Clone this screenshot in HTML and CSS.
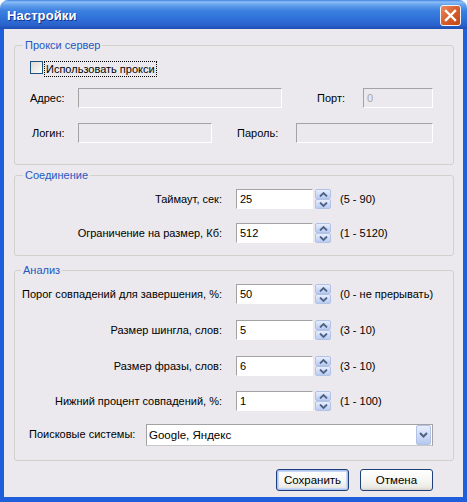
FILE: index.html
```html
<!DOCTYPE html>
<html lang="ru">
<head>
<meta charset="utf-8">
<title>Настройки</title>
<link rel="stylesheet" href="styles.css">
</head>
<body>
<div class="window">
  <div class="titlebar">
    <span class="title">Настройки</span>
    <span class="close">
      <svg width="13" height="13" viewBox="0 0 13 13"><path d="M2 2 L11 11 M11 2 L2 11" stroke="#fff" stroke-width="2.4" stroke-linecap="square"/></svg>
    </span>
  </div>
  <div class="client">
    <fieldset class="group g-proxy">
      <legend>Прокси сервер</legend>
      <div class="check-row">
        <span class="checkbox"></span>
        <span class="focus">Использовать прокси</span>
      </div>
      <div class="row r-addr">
        <span class="lbl l-addr">Адрес:</span>
        <span class="field disabled f-addr"></span>
        <span class="lbl l-port">Порт:</span>
        <span class="field disabled f-port"><span class="gray">0</span></span>
      </div>
      <div class="row r-login">
        <span class="lbl l-login">Логин:</span>
        <span class="field disabled f-login"></span>
        <span class="lbl l-pass">Пароль:</span>
        <span class="field disabled f-pass"></span>
      </div>
    </fieldset>

    <fieldset class="group g-conn">
      <legend>Соединение</legend>
      <div class="spin-row first">
        <span class="slbl">Таймаут, сек:</span>
        <span class="field num">25</span>
        <span class="spin">
          <span class="sbtn"><svg width="9" height="5" viewBox="0 0 9 5"><path d="M1 4.5 L4.5 1 L8 4.5" fill="none" stroke="#4d6185" stroke-width="1.8"/></svg></span>
          <span class="sbtn"><svg width="9" height="5" viewBox="0 0 9 5"><path d="M1 0.5 L4.5 4 L8 0.5" fill="none" stroke="#4d6185" stroke-width="1.8"/></svg></span>
        </span>
        <span class="range">(5 - 90)</span>
      </div>
      <div class="spin-row r2">
        <span class="slbl">Ограничение на размер, Кб:</span>
        <span class="field num">512</span>
        <span class="spin">
          <span class="sbtn"><svg width="9" height="5" viewBox="0 0 9 5"><path d="M1 4.5 L4.5 1 L8 4.5" fill="none" stroke="#4d6185" stroke-width="1.8"/></svg></span>
          <span class="sbtn"><svg width="9" height="5" viewBox="0 0 9 5"><path d="M1 0.5 L4.5 4 L8 0.5" fill="none" stroke="#4d6185" stroke-width="1.8"/></svg></span>
        </span>
        <span class="range">(1 - 5120)</span>
      </div>
    </fieldset>

    <fieldset class="group g-anal">
      <legend>Анализ</legend>
      <div class="spin-row first">
        <span class="slbl">Порог совпадений для завершения, %:</span>
        <span class="field num">50</span>
        <span class="spin">
          <span class="sbtn"><svg width="9" height="5" viewBox="0 0 9 5"><path d="M1 4.5 L4.5 1 L8 4.5" fill="none" stroke="#4d6185" stroke-width="1.8"/></svg></span>
          <span class="sbtn"><svg width="9" height="5" viewBox="0 0 9 5"><path d="M1 0.5 L4.5 4 L8 0.5" fill="none" stroke="#4d6185" stroke-width="1.8"/></svg></span>
        </span>
        <span class="range">(0 - не прерывать)</span>
      </div>
      <div class="spin-row r2">
        <span class="slbl">Размер шингла, слов:</span>
        <span class="field num">5</span>
        <span class="spin">
          <span class="sbtn"><svg width="9" height="5" viewBox="0 0 9 5"><path d="M1 4.5 L4.5 1 L8 4.5" fill="none" stroke="#4d6185" stroke-width="1.8"/></svg></span>
          <span class="sbtn"><svg width="9" height="5" viewBox="0 0 9 5"><path d="M1 0.5 L4.5 4 L8 0.5" fill="none" stroke="#4d6185" stroke-width="1.8"/></svg></span>
        </span>
        <span class="range">(3 - 10)</span>
      </div>
      <div class="spin-row r3">
        <span class="slbl">Размер фразы, слов:</span>
        <span class="field num">6</span>
        <span class="spin">
          <span class="sbtn"><svg width="9" height="5" viewBox="0 0 9 5"><path d="M1 4.5 L4.5 1 L8 4.5" fill="none" stroke="#4d6185" stroke-width="1.8"/></svg></span>
          <span class="sbtn"><svg width="9" height="5" viewBox="0 0 9 5"><path d="M1 0.5 L4.5 4 L8 0.5" fill="none" stroke="#4d6185" stroke-width="1.8"/></svg></span>
        </span>
        <span class="range">(3 - 10)</span>
      </div>
      <div class="spin-row r4">
        <span class="slbl">Нижний процент совпадений, %:</span>
        <span class="field num">1</span>
        <span class="spin">
          <span class="sbtn"><svg width="9" height="5" viewBox="0 0 9 5"><path d="M1 4.5 L4.5 1 L8 4.5" fill="none" stroke="#4d6185" stroke-width="1.8"/></svg></span>
          <span class="sbtn"><svg width="9" height="5" viewBox="0 0 9 5"><path d="M1 0.5 L4.5 4 L8 0.5" fill="none" stroke="#4d6185" stroke-width="1.8"/></svg></span>
        </span>
        <span class="range">(1 - 100)</span>
      </div>
      <div class="combo-row">
        <span class="clbl">Поисковые системы:</span>
        <span class="combo">
          <span class="combo-text">Google, Яндекс</span>
          <span class="combo-btn"><svg width="9" height="6" viewBox="0 0 9 6"><path d="M1 1 L4.5 4.5 L8 1" fill="none" stroke="#4d6185" stroke-width="2"/></svg></span>
        </span>
      </div>
    </fieldset>

    <div class="buttons">
      <span class="btn default">Сохранить</span>
      <span class="btn">Отмена</span>
    </div>
  </div>
</div>
</body>
</html>
```

FILE: styles.css
```css
html, body {
  margin: 0;
  padding: 0;
  background: #ffffff;
}
body {
  font-family: "Liberation Sans", Arial, sans-serif;
  font-size: 11px;
  color: #000;
}
.window {
  width: 467px;
  height: 502px;
  display: flex;
  flex-direction: column;
  overflow: hidden;
}
.titlebar {
  height: 29px;
  flex: none;
  box-sizing: border-box;
  display: flex;
  align-items: center;
  padding: 2px 0 0 7px;
  border-radius: 8px 8px 0 0;
  background: linear-gradient(to bottom, #3f80e2 0px, #8ebff5 2px, #63a1ed 5px, #3b80e0 11px, #2f70d9 19px, #2a62cc 25px, #1f4db3 29px);
}
.title {
  color: #fff;
  font-weight: bold;
  font-size: 13px;
  letter-spacing: 0.1px;
  text-shadow: 1px 1px 0 #12318f;
}
.close {
  margin-left: auto;
  margin-right: 6px;
  width: 21px;
  height: 21px;
  box-sizing: border-box;
  border: 1px solid #f3f3f3;
  border-radius: 3px;
  background: linear-gradient(135deg, #ec8b63 0%, #d9602f 45%, #c24516 100%);
  display: flex;
  align-items: center;
  justify-content: center;
}
.close svg { display: block; }
.client {
  flex: none;
  height: 473px;
  box-sizing: border-box;
  background: #ebe9ed;
  border-left: 4px solid #1f5fdc;
  border-right: 4px solid #1f5fdc;
  border-bottom: 5px solid #1f5fdc;
  padding: 0 9px 0 10px;
  display: flex;
  flex-direction: column;
}
.group {
  margin: 0;
  padding: 0;
  border: 1px solid #d3d1cc;
  border-radius: 3px;
  min-width: 0;
}
.group legend {
  margin-left: 8px;
  padding: 0 2px;
  line-height: 14px;
  color: #2458c2;
}
.g-proxy { margin-top: 9px; padding-bottom: 21px; }
.g-conn { margin-top: 3px; padding-bottom: 12px; }
.g-anal { margin-top: 7px; padding-bottom: 14px; }
.g-anal legend { margin-left: 6px; }

.check-row {
  display: flex;
  align-items: flex-start;
  height: 16px;
  margin: 9px 0 0 15px;
}
.checkbox {
  width: 13px;
  height: 13px;
  box-sizing: border-box;
  border: 1px solid #1c5180;
  background: linear-gradient(135deg, #dcdad3 0%, #f2f2ee 70%, #ffffff 100%);
}
.focus {
  margin-left: 1px;
  height: 16px;
  box-sizing: border-box;
  border: 1px dotted #000;
  padding: 0 1px;
  line-height: 14px;
}
.row {
  display: flex;
  align-items: center;
  height: 20px;
  margin-left: 15px;
}
.r-addr { margin-top: 11px; }
.r-login { margin-top: 15px; }
.lbl { flex: none; }
.l-addr { width: 48px; }
.l-port { width: 46px; margin-left: 35px; }
.l-login { width: 46px; padding-left: 2px; }
.l-pass { width: 59px; margin-left: 25px; }

.field {
  flex: none;
  height: 20px;
  box-sizing: border-box;
  border-top: 1px solid #a3a3a3;
  border-left: 1px solid #a3a3a3;
  border-right: 1px solid #ffffff;
  border-bottom: 1px solid #ffffff;
  background: #fff;
  display: flex;
  align-items: center;
  padding-left: 3px;
}
.field.disabled { background: #ebe9ed; }
.f-addr { width: 204px; }
.f-port { width: 70px; }
.f-login { width: 134px; }
.f-pass { width: 137px; }
.gray { color: #a7a6aa; }

.spin-row {
  display: flex;
  align-items: center;
  height: 20px;
  margin-left: 0;
}
.g-conn .first { margin-top: 7px; }
.g-conn .r2 { margin-top: 14px; }
.g-anal .first { margin-top: 7px; }
.g-anal .r2 { margin-top: 16px; }
.g-anal .r3 { margin-top: 16px; }
.g-anal .r4 { margin-top: 15px; }
.slbl {
  flex: none;
  width: 207px;
  text-align: right;
  margin-right: 14px;
  white-space: nowrap;
}
.field.num { width: 77px; }
.spin {
  flex: none;
  margin-left: 2px;
  width: 16px;
  height: 20px;
  display: flex;
  flex-direction: column;
  gap: 0;
}
.sbtn {
  height: 10px;
  box-sizing: border-box;
  border: 1px solid #b2c2e6;
  border-radius: 2px;
  background: linear-gradient(to bottom, #e8eefc 0%, #cbd9f6 60%, #b9cbf1 100%);
  display: flex;
  align-items: center;
  justify-content: center;
}
.sbtn svg { display: block; }
.range {
  margin-left: 9px;
  white-space: nowrap;
}
.combo-row {
  display: flex;
  align-items: center;
  height: 22px;
  margin: 13px 0 0 14px;
}
.clbl {
  width: 117px;
  flex: none;
  padding-bottom: 3px;
}
.combo {
  flex: none;
  width: 287px;
  height: 22px;
  box-sizing: border-box;
  border-top: 1px solid #a3a3a3;
  border-left: 1px solid #a3a3a3;
  border-right: 1px solid #a3a3a3;
  border-bottom: 1px solid #c8c8c8;
  background: #fff;
  display: flex;
  align-items: center;
  padding: 1px 1px 1px 2px;
}
.combo-text { flex: 1; font-size: 11.5px; }
.combo-btn {
  width: 15px;
  height: 20px;
  box-sizing: border-box;
  border: 1px solid #b2c2e6;
  border-radius: 2px;
  background: linear-gradient(to bottom, #e8eefc 0%, #cbd9f6 60%, #b5c8f0 100%);
  display: flex;
  align-items: center;
  justify-content: center;
}
.buttons {
  display: flex;
  justify-content: flex-end;
  gap: 11px;
  margin-top: 8px;
  padding-right: 21px;
}
.btn {
  width: 73px;
  height: 22px;
  box-sizing: border-box;
  border: 1px solid #1f3f7a;
  border-radius: 3px;
  background: linear-gradient(to bottom, #ffffff 0%, #f6f6f4 50%, #ebebe6 85%, #d6d3cc 100%);
  display: flex;
  align-items: center;
  justify-content: center;
  font-size: 11.5px;
}
.btn.default {
  box-shadow: inset 0 0 0 1px #a9c2ee, inset 0 0 0 2px #cad7f3;
}
```
